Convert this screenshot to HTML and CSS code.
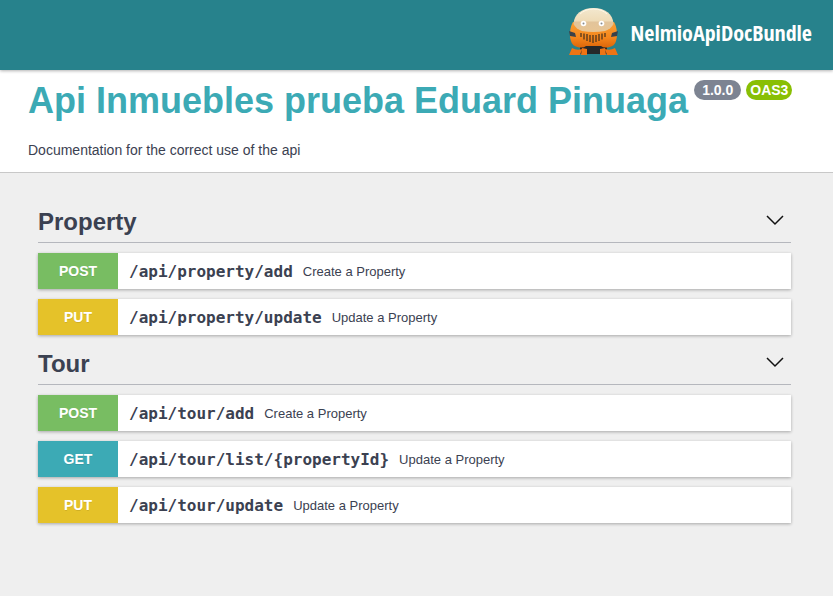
FILE: index.html
```html
<!DOCTYPE html>
<html lang="en">
<head>
<meta charset="utf-8">
<title>Api Inmuebles prueba Eduard Pinuaga</title>
<link rel="stylesheet" href="styles.css">
</head>
<body>
<header class="topbar">
  <a class="brand" href="#">
    <svg class="robot" viewBox="0 0 50 48" aria-hidden="true">
      <defs>
        <linearGradient id="dome" x1="0" y1="0" x2="0" y2="1">
          <stop offset="0" stop-color="#f3e8cf"/>
          <stop offset=".52" stop-color="#efdcb8"/>
          <stop offset=".6" stop-color="#e2c49a"/>
          <stop offset="1" stop-color="#e8c594"/>
        </linearGradient>
        <linearGradient id="shell" x1="0" y1="0" x2="0" y2="1">
          <stop offset="0" stop-color="#f9a136"/>
          <stop offset=".6" stop-color="#f5861c"/>
          <stop offset="1" stop-color="#dc660a"/>
        </linearGradient>
      </defs>
      <path fill="#25282a" d="M11 36h27v10H11z"/>
      <path fill="url(#shell)" d="M4 14C1 19 0 27 2 33Q3 38 10 39.500Q15 40 17 38H32Q34 40 39 39.500Q46 38 47 33C49 27 48 19 45 14z"/>
      <path fill="url(#dome)" d="M4.500 16C5 6 13 0 24.500 0S44 6 44.500 16Q42 21 36 23Q24.500 25 13 23Q7 21 4.500 16z"/>
      <path fill="none" stroke="#fff8e8" d="M11 6Q16 1 24.500 1T38 6"/>
      <path fill="#ee7414" d="M3 40q5 3 10 1l-2 6H0zM36 41q5 2 10-1l3 7H38zM13 40l5 1v6h-6zM31 41l5-1 1 7h-6z"/>
      <path fill="#3b4149" d="M0 23l6 2 1 4-6-1zM49 23l-6 2-1 4 6-1z"/>
      <circle cx="14.500" cy="15.500" r="2.800" fill="#fff"/><circle cx="32.500" cy="15.500" r="2.800" fill="#fff"/>
      <circle cx="14.500" cy="15.500" r="1" fill="#888b90"/><circle cx="32.500" cy="15.500" r="1" fill="#888b90"/>
      <path fill="none" stroke="#65401c" stroke-width="1.500" d="M12 25v4M15 25.500v6M18 26v7M21 27v7M24 27v8M27 27v7M30 26v7M33 25.500v6M36 25v4"/>
    </svg>
    <span class="wordmark">NelmioApiDocBundle</span>
  </a>
</header>
<main>
  <section class="info">
    <h1 class="title">Api Inmuebles prueba Eduard Pinuaga
      <span class="badges"><span class="badge">1.0.0</span><span class="badge badge-oas">OAS3</span></span>
    </h1>
    <p class="description">Documentation for the correct use of the api</p>
  </section>
  <div class="operations">
    <section class="group">
      <div class="group-head">
        <h2 class="group-title">Property</h2>
        <button class="toggle" type="button" aria-label="Collapse Property"><svg class="chevron" viewBox="0 0 20 20"><path d="M2 6l8 8 8-8"/></svg></button>
      </div>
      <a class="row" href="#"><span class="method post">POST</span><span class="path">/api/property/add</span><span class="summary">Create a Property</span></a>
      <a class="row" href="#"><span class="method put">PUT</span><span class="path">/api/property/update</span><span class="summary">Update a Property</span></a>
    </section>
    <section class="group">
      <div class="group-head">
        <h2 class="group-title">Tour</h2>
        <button class="toggle" type="button" aria-label="Collapse Tour"><svg class="chevron" viewBox="0 0 20 20"><path d="M2 6l8 8 8-8"/></svg></button>
      </div>
      <a class="row" href="#"><span class="method post">POST</span><span class="path">/api/tour/add</span><span class="summary">Create a Property</span></a>
      <a class="row" href="#"><span class="method get">GET</span><span class="path">/api/tour/list/{propertyId}</span><span class="summary">Update a Property</span></a>
      <a class="row" href="#"><span class="method put">PUT</span><span class="path">/api/tour/update</span><span class="summary">Update a Property</span></a>
    </section>
  </div>
</main>
</body>
</html>
```
FILE: styles.css
```css
* { box-sizing: border-box; }
body {
  margin: 0;
  background: #efefef;
  color: #3b4151;
  font-family: "Liberation Sans", Arial, sans-serif;
}
h1, h2, p { margin: 0; }
a { color: inherit; text-decoration: none; }
.topbar {
  position: relative;
  display: flex;
  justify-content: flex-end;
  padding: 8px 21px 14px;
  background: #27828c;
  box-shadow: 0 1px 3px rgba(0, 0, 0, .3);
}
.brand { display: flex; align-items: center; gap: 12px; color: #fff; }
.robot { width: 50px; height: 48px; }
.wordmark {
  font-family: "Open Sans Condensed", "Liberation Sans Narrow", "Arial Narrow", "DejaVu Sans Condensed", sans-serif;
  font-size: 22px;
  font-weight: 700;
  line-height: 48px;
}
.info {
  padding: 8px 28px 12px;
  background: #fff;
  border-bottom: 1px solid #c8c8c8;
}
.title {
  color: #3caab5;
  font-size: 36px;
  line-height: 46px;
  white-space: nowrap;
}
.badges {
  display: inline-flex;
  gap: 5px;
  margin-left: -4px;
  vertical-align: top;
  padding-top: 2px;
}
.badge {
  padding: 0 8px;
  border-radius: 10px;
  background: #7d8492;
  color: #fff;
  font-size: 14px;
  line-height: 20px;
}
.badge-oas { padding: 0 4px; background: #89bf04; }
.description { padding-top: 16px; font-size: 14px; line-height: 20px; }
.operations { padding: 30px 42px 30px 38px; }
.group { display: flex; flex-direction: column; gap: 10px; margin-bottom: 10px; }
.group-head {
  display: flex;
  align-items: center;
  justify-content: space-between;
  height: 40px;
  padding: 0 6px 2px 0;
  border-bottom: 1px solid #b5b7bd;
}
.group-title { font-size: 24px; line-height: 36px; }
.toggle { display: flex; padding: 0 0 4px; border: 0; background: none; }
.chevron { width: 20px; height: 20px; fill: none; stroke: #111; stroke-width: 1.5; }
.row {
  display: flex;
  align-items: center;
  height: 36px;
  background: #fff;
  box-shadow: 0 1px 3px rgba(0, 0, 0, .3);
}
.method {
  width: 80px;
  color: #fff;
  font-size: 14px;
  font-weight: 700;
  line-height: 36px;
  text-align: center;
  text-shadow: 0 1px 0 rgba(0, 0, 0, .1);
}
.post { background: #78bd62; }
.put { background: #e5c229; }
.get { background: #3caab5; }
.path { padding: 2px 10px 0 11px; font: 700 16px/20px "DejaVu Sans Mono", monospace; }
.summary { padding-top: 2px; font-size: 13px; line-height: 20px; }
```
